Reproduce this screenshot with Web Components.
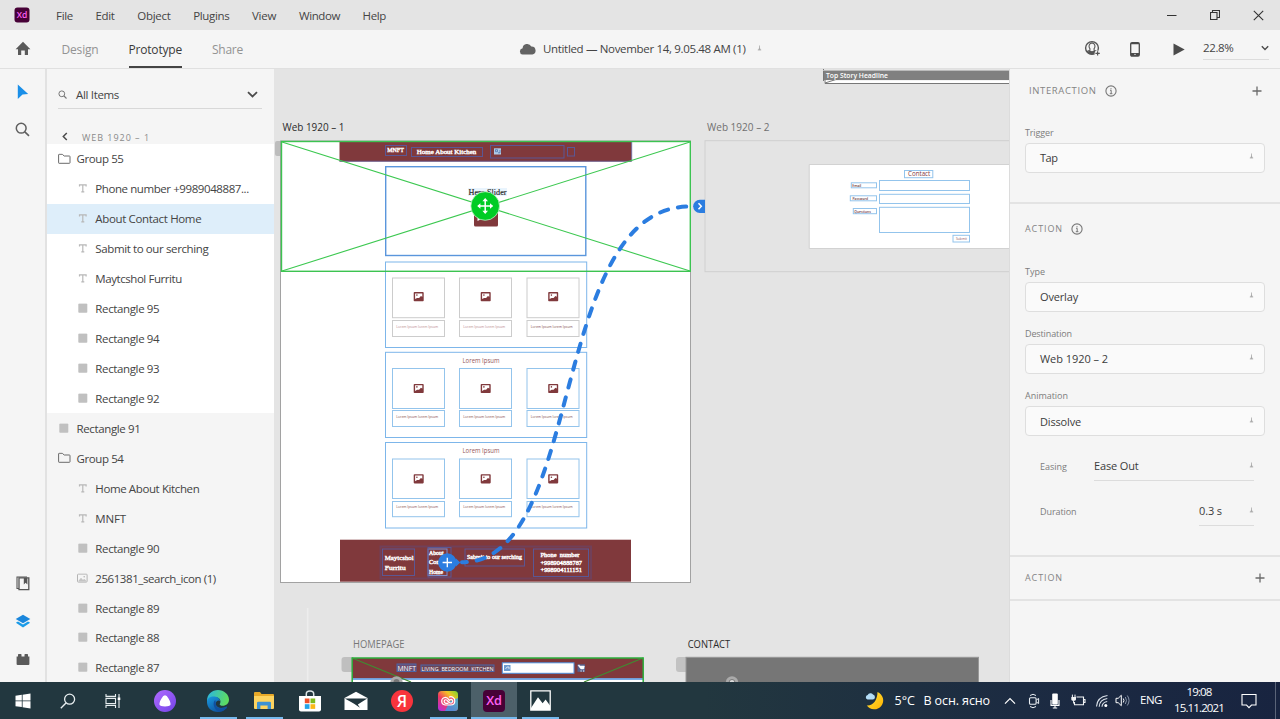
<!DOCTYPE html>
<html lang="en">
<head>
<meta charset="utf-8">
<title>Prototype editor</title>
<style>
html,body{margin:0;height:100%;overflow:hidden}
body{font-family:"Open Sans","Noto Sans",sans-serif;font-size:11.5px;color:#444}
</style>
</head>
<body>
<proto-app></proto-app>
<script>
function define(name, html, after) {
  const t = document.createElement('template');
  t.innerHTML = html;
  customElements.define(name, class extends HTMLElement {
    connectedCallback() {
      if (this.shadowRoot) return;
      this.attachShadow({mode: 'open'}).appendChild(document.importNode(t.content, true));
      if (after) after.call(this, this.shadowRoot);
    }
  });
}

// A one-line label whose tracking is adjusted to a given width
define('ui-label', `<style>
:host{display:block;flex:none;white-space:nowrap;line-height:16px}
span{display:inline-block;white-space:pre}
</style><span><slot></slot></span>`, function (root) {
  const w = +this.getAttribute('w'), size = this.getAttribute('size');
  if (size) this.style.fontSize = size + 'px';
  if (w) {
    this.style.letterSpacing = '0px';
    const natural = root.querySelector('span').getBoundingClientRect().width;
    this.style.letterSpacing = ((w - natural) / this.textContent.length) + 'px';
    this.style.width = w + 'px';
  }
});

const ICONS = {
  xd: [16,16,'<rect x=".5" y=".5" width="15" height="15" rx="3" fill="#470137"/><text x="2.8" y="10.6" font-size="8.5" font-weight="600" fill="#ff61f6" textLength="10.6" lengthAdjust="spacingAndGlyphs">Xd</text>'],
  home: [16,15,'<path d="M8 .8 15.4 8.2H13V14H9.8V9.5H6.2V14H3V8.2H.6Z" fill="#5a5a5a"/>'],
  min: [10,10,'<path d="M0 5.5H9.5" stroke="#333"/>'],
  restore: [10,10,'<path d="M.5 2.5H7V9.5H.5ZM2.5 2.5V.5H9.5V7.5H7" fill="none" stroke="#333" stroke-width="1.1"/>'],
  close: [11,11,'<path d="M.8.8 10.2 10.2M10.2.8.8 10.2" stroke="#333" stroke-width="1.1"/>'],
  cloud: [17,12,'<path d="M3.5 11.5A3.2 3.2 0 0 1 3.6 5.2 4.6 4.6 0 0 1 12.3 3.6 4 4 0 0 1 13.4 11.5Z" fill="#636363"/>'],
  tick: [5,6,'<path d="M2.5 .5V4M.8 5H4.2" stroke="#aaa" stroke-width=".8"/><path d="M2.5 2 3.8 5H1.2Z" fill="#aaa"/>'],
  user: [17,17,'<circle cx="8" cy="8" r="6.4" fill="none" stroke="#555" stroke-width="1.4"/><path d="M8 2.9A3 3.5 0 0 1 10 9L10.2 10.2 12.9 11.5A6 6 0 0 1 3.1 11.5L5.8 10.2 6 9A3 3.5 0 0 1 8 2.9Z" fill="#f5f5f5" stroke="#555" stroke-width="1.1"/><path d="M3.2 12 5.9 10.5 8 11.3 10.1 10.5 12 11.8 11 14H5Z" fill="#555"/><circle cx="13.6" cy="13.4" r="3" fill="#f5f5f5"/><path d="M13.6 11.2V15.6M11.4 13.4H15.8" stroke="#555" stroke-width="1.2"/>'],
  phone: [10,15,'<rect x=".7" y=".7" width="8.6" height="13.4" rx="1.3" fill="none" stroke="#4b4b4b" stroke-width="1.3"/><path d="M1 11H9V14H1ZM1 1H9V2.3H1Z" fill="#4b4b4b"/><circle cx="5" cy="12.4" r=".7" fill="#eee"/>'],
  play: [12,13,'<path d="M.5.4 11.7 6.5.5 12.6Z" fill="#4b4b4b"/>'],
  down: [8,6,'<path d="M.8 1.2 4 4.4 7.2 1.2" fill="none" stroke="#4b4b4b" stroke-width="1.4"/>'],
  downbig: [11,7,'<path d="M1 1.2 5.5 5.4 10 1.2" fill="none" stroke="#4b4b4b" stroke-width="1.8"/>'],
  back: [6,9,'<path d="M4.8 1 1.3 4.5 4.8 8" fill="none" stroke="#4b4b4b" stroke-width="1.5"/>'],
  cursor: [12,16,'<path d="M.8.6 11.2 10 5.5 10.4.8 15Z" fill="#1a8fe8"/>'],
  search: [15,15,'<circle cx="6.2" cy="6.2" r="4.9" fill="none" stroke="#5f5f5f" stroke-width="1.5"/><path d="M9.8 9.8 14 13.8" stroke="#5f5f5f" stroke-width="1.6"/>'],
  searchsm: [9,9,'<circle cx="3.8" cy="3.8" r="2.9" fill="none" stroke="#777"/><path d="M6 6 8.5 8.5" stroke="#777" stroke-width="1.1"/>'],
  library: [14,15,'<path d="M3 12.5H1V1H11" fill="none" stroke="#555" stroke-width="1.1"/><path d="M3 1.8H12.8V13.7H3Z" fill="none" stroke="#555" stroke-width="1.3"/><path d="M7.8 2H11.4V8.4L9.6 6.7 7.8 8.4Z" fill="#555"/>'],
  layers: [16,15,'<path d="M8 .8 15.3 5 8 9.2.7 5Z" fill="#1a86dc"/><path d="M.9 8.8 3 7.5 8 10.4 13 7.5 15.1 8.8 8 13.6Z" fill="#1a9be8"/>'],
  plugin: [14,13,'<path d="M.6 3.4H2V1.6Q2 .9 2.8.9H4.8Q5.5.9 5.5 1.6V3.4H8.5V1.6Q8.5.9 9.2.9H11.2Q12 .9 12 1.6V3.4H13.4V11Q13.4 12 12.4 12H1.6Q.6 12 .6 11Z" fill="#5a5a5a"/>'],
  folder: [13,11,'<path d="M.6 9.5V1.5Q.6 1 1.1 1H4.3L6.2 2.7H11.4Q12 2.7 12 3.3V9.5Q12 10 11.4 10H1.1Q.6 10 .6 9.5Z" fill="none" stroke="#6b6b6b"/>'],
  text: [10,10,'<path d="M1.5 3.2V1.5H8.1V3.2M4.8 1.5V8.5M3.3 8.5H6.3" fill="none" stroke="#b8b8b8" stroke-width="1.2"/>'],
  rect: [10,10,'<rect x=".3" y=".3" width="9" height="9.2" rx=".8" fill="#c0c0c0"/>'],
  image: [11,10,'<rect x=".5" y=".8" width="9.6" height="8" rx=".8" fill="none" stroke="#b4b4b4"/><path d="M1.5 7.5 4 4.5 5.8 6.5 7.5 5.8 9.2 7.5V8.3H1.5Z" fill="#c4c4c4"/><circle cx="7.2" cy="3.4" r=".8" fill="#b4b4b4"/>'],
  info: [12,12,'<circle cx="6" cy="6" r="5.1" fill="none" stroke="#777" stroke-width="1.1"/><path d="M5 5.3H6.2V8.6M4.8 8.7H7.4M6 3.2V4.3" fill="none" stroke="#777"/>'],
  plus: [10,10,'<path d="M5 .5V9.5M.5 5H9.5" stroke="#6b6b6b" stroke-width="1.3"/>'],
  win: [16,16,'<path d="M.5 2.8 6.8 1.8V7.5H.5ZM7.6 1.7 15.5.5V7.5H7.6ZM.5 8.3H6.8V14.1L.5 13.2ZM7.6 8.3H15.5V15.5L7.6 14.3Z" fill="#fff"/>'],
  wsearch: [16,16,'<circle cx="9.6" cy="6.2" r="5" fill="none" stroke="#e8eef0" stroke-width="1.3"/><path d="M6 10 .8 15.2" stroke="#e8eef0" stroke-width="1.4"/>'],
  taskview: [16,16,'<path d="M1 1V3.4H10.5V1M1 15V12.5H10.5V15M1 5.4H10.5V10.6H1ZM14 1V15" fill="none" stroke="#e8eef0" stroke-width="1.1"/><path d="M12.7 4.5H15.3V7H12.7Z" fill="#fff"/>'],
  alice: [22,22,'<defs><linearGradient id="a" x2="1" y2="1"><stop stop-color="#b06bff"/><stop offset="1" stop-color="#7343e8"/></linearGradient></defs><circle cx="11" cy="11" r="11" fill="url(#a)"/><path d="M11 5.2Q12.8 5.2 14.5 8.5 17.2 13 16.4 15.1 15.7 16.5 11 16.5T5.6 15.1Q4.8 13 7.5 8.5 9.2 5.2 11 5.2Z" fill="#fff"/>'],
  edge: [24,24,'<defs><linearGradient id="e" x2="1" y2=".25"><stop stop-color="#28b4e8"/><stop offset="1" stop-color="#5ddc62"/></linearGradient><linearGradient id="f" x2=".8" y2="1"><stop stop-color="#1a9ae0"/><stop offset="1" stop-color="#0d4a96"/></linearGradient></defs><path d="M1 12C1 5 6 1 12 1S23 5.5 23 10.8C23 14.5 20 16.8 16.8 16.8 14.7 16.8 13.6 16 13.7 15.2 15.5 12.5 14.2 8.2 9.6 8.2 5 8.2 1.2 10.8 1 14Z" fill="url(#e)"/><path d="M1 13C1 9 4.7 7.2 8.5 7.5 12.3 7.8 14 10.1 14 12 12.5 10.8 10 11.7 9.8 14.6 9.6 18.4 14.4 20.2 19.9 17.8 21.6 17.1 21.2 18.6 20.3 19.5 18 22 15.2 23 12 23 5.5 23 1 18.8 1 13Z" fill="url(#f)"/><path d="M9.3 11C6.2 13.4 7.6 20 12.3 22.3 15.6 23.2 19 20.7 20.8 18.7 16 20.6 9.7 19.8 9.8 14.2Z" fill="#114f9e"/>'],
  explorer: [22,20,'<path d="M1 2Q1 1 2 1H7L8.5 3H20Q21 3 21 4V17H1Z" fill="#e8a928"/><path d="M1 5H21V17Q21 18 20 18H2Q1 18 1 17Z" fill="#fdd35f"/><path d="M4 18V12Q4 10.8 5.2 10.8H16.8Q18 10.8 18 12V18H14.6V14.5H7.4V18Z" fill="#3c91d4"/>'],
  store: [22,22,'<path d="M7.3 7V4Q7.3 1 11 1T14.7 4V7" fill="none" stroke="#dce4e6" stroke-width="1.5"/><path d="M0 6H22V19.5Q22 21.5 20 21.5H2Q0 21.5 0 19.5Z" fill="#fff"/><path d="M5.8 8.5H10.5V13.2H5.8Z" fill="#f0512a"/><path d="M11.5 8.5H16.2V13.2H11.5Z" fill="#7ebb1c"/><path d="M5.8 14.2H10.5V18.9H5.8Z" fill="#23a4e8"/><path d="M11.5 14.2H16.2V18.9H11.5Z" fill="#fbb817"/>'],
  mail: [24,20,'<path d="M.5 7 12 .8 23.5 7V19H.5Z" fill="#fff"/><path d="M.8 7.4H23.2L13.8 13.4 16 16.8 9.7 12.6Z" fill="#22363e"/>'],
  yandex: [22,22,'<circle cx="11" cy="11" r="11" fill="#f8343c"/><text x="11" y="16.6" font-size="15.5" font-weight="600" text-anchor="middle" fill="#fff">Я</text>'],
  cc: [20,20,'<defs><linearGradient id="g" x1="1" y1="0" x2="0" y2="1"><stop stop-color="#70d630"/><stop offset=".3" stop-color="#f5c425"/><stop offset=".6" stop-color="#f03b5e"/><stop offset="1" stop-color="#b12df0"/></linearGradient></defs><rect width="20" height="20" rx="3.5" fill="url(#g)"/><path d="M20 7V16.5Q20 20 16.5 20H7L12 10Z" fill="#329eea" opacity=".8"/><path d="M11 6.2A4 4 0 0 1 16.8 10.2 4 4 0 0 1 12.8 14H7A3.8 3.8 0 0 1 6.8 6.5C9.4 6 10.3 8 11.7 9.8M10.5 12.2C7.8 12.8 6.3 12.1 6.2 10.2 6.3 8.3 8.7 8.3 9.6 10L12 12C14 12.2 15.2 10.8 14.6 9.5 13.6 7.8 11.7 8.5 11.4 9.5" fill="#ee5a78" stroke="#fff" stroke-width="1.2"/>'],
  xdbig: [22,22,'<rect width="22" height="22" rx="4" fill="#470137"/><text x="3.2" y="15.4" font-size="12.5" font-weight="600" fill="#ff61f6" textLength="15.8" lengthAdjust="spacingAndGlyphs">Xd</text>'],
  photos: [21,21,'<path d="M.8.8H20.2V20.2H.8Z" fill="none" stroke="#fff" stroke-width="1.3"/><path d="M1 18 8 7.2 12.6 13.2 15.6 9.5 20 15.5V20H1Z" fill="#fff"/>'],
  moon: [20,20,'<defs><linearGradient id="m" x2="1" y2="1"><stop stop-color="#ffe33e"/><stop offset="1" stop-color="#ffb300"/></linearGradient></defs><path d="M12.5 1A9 9 0 1 1 1.8 14.5C8 15 12.5 9 12.5 1Z" fill="url(#m)"/><path d="M2.6 8.6A2.3 2.3 0 0 1 2.7 4.1 3 3 0 0 1 8 3.5 2.6 2.6 0 0 1 7.7 8.6Z" fill="#b4def8"/>'],
  up: [12,8,'<path d="M1 6.7 6 1.7 11 6.7" fill="none" stroke="#fff" stroke-width="1.2"/>'],
  meet: [12,16,'<rect x="1.5" y="4.7" width="6.6" height="6.6" rx="1" fill="none" stroke="#e8edf2" stroke-width="1.1"/><path d="M8.3 7 10.6 5.5V10.5L8.3 9M2 2.5Q5 0 8 2.5M2 13.5Q5 16 8 13.5" fill="none" stroke="#e8edf2"/>'],
  mic: [10,16,'<rect x="2.2" y=".5" width="5.6" height="11" rx="1" fill="#fff"/><path d="M1 7V12.4H9V7M5 12.4V15M2.8 15H7.2" fill="none" stroke="#fff" stroke-width="1.1"/>'],
  battery: [16,13,'<path d="M6.5 3H13.5V10.8H4.5V8M13.8 5.5H15V8.5H13.8" fill="none" stroke="#f1f3f5" stroke-width="1.1"/><path d="M1.3 3H6V5.6Q6 7 3.6 7T1.3 5.6Z" fill="#f1f3f5"/><path d="M2.4.6V3M5 .6V3M3.6 7V9.5" stroke="#f1f3f5"/>'],
  wifi: [14,14,'<path d="M1.5 12.5Q2 3 12.5 1.5M4.2 12.7Q4.5 5.7 12.3 4.5M7 12.8Q7.3 8.3 12.2 7.5" fill="none" stroke="#d9e0e8" stroke-width="1.1"/><circle cx="10.8" cy="11.5" r="1.5" fill="#fff"/>'],
  sound: [16,13,'<path d="M1 4.3H3.2L6.3 1.3V11.7L3.2 8.7H1Z" fill="none" stroke="#fff"/><path d="M8.3 4.5Q9.6 6.5 8.3 8.5" fill="none" stroke="#fff"/><path d="M10.3 3Q12.7 6.5 10.3 10M12.3 1.5Q15.8 6.5 12.3 11.5" fill="none" stroke="#8894a7"/>'],
  note: [16,16,'<path d="M1 1.5H15V12H10.5L8 14.6 5.5 12H1Z" fill="none" stroke="#fff" stroke-width="1.1"/>']
};
customElements.define('ui-icon', class extends HTMLElement {
  connectedCallback() {
    if (this.shadowRoot) return;
    const [w, h, body] = ICONS[this.getAttribute('name')];
    this.attachShadow({mode: 'open'}).innerHTML = `<style>:host{display:block;flex:none;width:${w}px;height:${h}px}svg{display:block}</style><svg width="${w}" height="${h}" viewBox="0 0 ${w} ${h}">${body}</svg>`;
  }
});

define('title-bar', `<style>
:host{display:flex;height:30px;background:#e4e4e4;align-items:center;box-sizing:border-box;padding:0 16px 1px 14px}
nav{display:flex;margin-left:26px;gap:22.6px;padding-top:2px}
.win{margin-left:auto;display:flex;gap:33px;align-items:center;padding-top:1px}
</style><ui-icon name="xd"></ui-icon>
<nav><ui-label w="17">File</ui-label><ui-label w="19">Edit</ui-label><ui-label w="33.5">Object</ui-label><ui-label w="36">Plugins</ui-label><ui-label w="24.5">View</ui-label><ui-label w="41">Window</ui-label><ui-label w="23.5">Help</ui-label></nav>
<div class="win"><ui-icon name="min"></ui-icon><ui-icon name="restore"></ui-icon><ui-icon name="close"></ui-icon></div>`);

define('mode-bar', `<style>
:host{display:grid;grid-template-columns:519px 1fr auto;height:39px;background:#f5f5f5;box-sizing:border-box;border-bottom:1px solid #e0e0e0}
.l,.m,.r{display:flex;align-items:center}
.l{padding-left:14.5px;gap:30px;color:#939393;font-size:12px}
.l ui-icon{margin-right:1px;margin-top:-1px}
.tab{height:38px;display:flex;align-items:center;box-sizing:border-box;border-bottom:2px solid transparent;padding-top:3px}
.on{border-color:#444;color:#3a3a3a}
.m{padding-bottom:1px}
.m ui-label{margin:0 11px 0 7px;color:#444}
.r{padding:0 11px 1px 0}
.zoom{display:flex;align-items:center;width:66px;height:22px;justify-content:space-between;border-bottom:1px solid #dcdcdc;margin-left:18px}
</style>
<div class="l"><ui-icon name="home"></ui-icon><div class="tab"><ui-label w="37">Design</ui-label></div><div class="tab on"><ui-label w="53.5">Prototype</ui-label></div><div class="tab"><ui-label w="31">Share</ui-label></div></div>
<div class="m"><ui-icon name="cloud"></ui-icon><ui-label w="202.5">Untitled — November 14, 9.05.48 AM (1)</ui-label><ui-icon name="tick" style="margin-top:-2px"></ui-icon></div>
<div class="r"><ui-icon name="user"></ui-icon><ui-icon name="phone" style="margin:1px 33px 0 29px"></ui-icon><ui-icon name="play" style="margin-top:1px"></ui-icon><div class="zoom"><ui-label w="30.5">22.8%</ui-label><ui-icon name="down"></ui-icon></div></div>`);

define('tool-rail', `<style>
:host{display:flex;flex-direction:column;align-items:center;width:47px;box-sizing:border-box;padding:15px 0 16px 0;background:#f5f5f5;border-right:2px solid #e2e2e2}
.s{flex:1}
</style><ui-icon name="cursor"></ui-icon><ui-icon name="search" style="margin-top:22px"></ui-icon><div class="s"></div><ui-icon name="library"></ui-icon><ui-icon name="layers" style="margin:23px 0 24px"></ui-icon><ui-icon name="plugin"></ui-icon>`);

define('layer-row', `<style>
:host{display:flex;height:29.95px;box-sizing:border-box;align-items:center;padding:1px 0 0 10.5px}
:host([deep]){padding-left:29.3px}
:host([selected]){background:#deeefa}
.i{width:13px;display:flex;justify-content:center;margin-right:6px;transform:translateY(-.7px)}
</style><span class="i"></span><slot></slot>`, function (root) {
  const i = document.createElement('ui-icon');
  i.setAttribute('name', this.getAttribute('icon'));
  root.querySelector('.i').append(i);
});

define('layers-panel', `<style>
:host{display:flex;flex-direction:column;width:227px;height:613px;background:#f5f5f5;overflow:hidden}
:host>*,.search,.crumb,.open,.rest{flex:none}
.search{display:flex;align-items:center;margin:12px 12px 0 11px;height:28px;box-sizing:border-box;border-bottom:1.5px solid #d8d8d8;padding:0 4px 0 0}
.search ui-label{margin-left:9px;margin-right:auto}
.crumb{display:flex;align-items:center;height:35px;box-sizing:border-box;padding:22px 0 0 15px;color:#8a8a8a}
.open{background:#fff}
</style>
<div class="search"><ui-icon name="searchsm"></ui-icon><ui-label w="43">All Items</ui-label><ui-icon name="downbig"></ui-icon></div>
<div class="crumb"><ui-icon name="back" style="margin:-3px 14px 0 0"></ui-icon><ui-label size="9" w="68">WEB 1920 – 1</ui-label></div>
<div class="open"></div><div class="rest"></div>`, function (root) {
  const row = (icon, text, w, deep, sel) => `<layer-row icon="${icon}" ${deep ? 'deep' : ''} ${sel ? 'selected' : ''}><ui-label w="${w}">${text}</ui-label></layer-row>`;
  root.querySelector('.open').innerHTML = row('folder', 'Group 55', 47) + row('text', 'Phone number +9989048887...', 153.5, 1) + row('text', 'About Contact Home', 106, 1, 1) + row('text', 'Sabmit to our serching', 113, 1) + row('text', 'Maytcshol Furritu', 86.5, 1) + [95, 94, 93, 92].map(n => row('rect', 'Rectangle ' + n, 64, 1)).join('');
  root.querySelector('.rest').innerHTML = row('rect', 'Rectangle 91', 64) + row('folder', 'Group 54', 47) + row('text', 'Home About Kitchen', 104, 1) + row('text', 'MNFT', 30.5, 1) + row('rect', 'Rectangle 90', 64, 1) + row('image', '2561381_search_icon (1)', 120.5, 1) + [89, 88, 87].map(n => row('rect', 'Rectangle ' + n, 64, 1)).join('');
});

// The free design canvas: artboards, selection frames and the prototype wire
define('design-canvas', `<style>
:host{display:block;background:#e4e4e4;overflow:hidden;min-width:0}
svg{display:block}
</style><div></div>`, function (root) {
  const box = (x, y, x2, y2, stroke, fill = 'none', sw = 1) => `<rect x="${x}" y="${y}" width="${x2 - x}" height="${y2 - y}" fill="${fill}" stroke="${stroke}" stroke-width="${sw}"/>`;
  const txt = (x, y, w, size, fill, s, extra = '') => `<text x="${x}" y="${y}" font-size="${size}" fill="${fill}" textLength="${w}" lengthAdjust="spacingAndGlyphs" ${extra}>${s}</text>`;
  const M = '#80393c', B = '#93c4ec', F = '#5a5794', serif = 'font-family="Liberation Serif,serif" stroke="#fff" stroke-width=".4"';
  const pic = (x, y) => `<g transform="translate(${x - 5} ${y - 4.7})"><rect width="10" height="9.2" rx=".8" fill="${M}"/><path d="M1.4 1.3H8.6V4.6L7.2 3.8 5.4 5.8H3.4L1.4 7Z" fill="#fff"/><circle cx="3.2" cy="3" r=".8" fill="${M}"/></g>`;
  const group = (y, y2, cy, cy2, ty, ty2, iy, line, title, base) => {
    let o = box(385.5, y, 586.7, y2, '#7db6ea');
    if (title) o += txt(462.5, title, 37, 7, '#94585b', 'Lorem Ipsum');
    [392.5, 459.5, 527].forEach((x, i) => {
      o += box(x, cy, x + 52, cy2, line) + box(x, ty, x + 52, ty2, line) + pic(x + 26.2, iy);
      o += txt(x + 3.7, base, 42, 3.8, !title && i < 2 ? '#b98e90' : '#854e50', 'Lorem Ipsum lorem Ipsum');
    });
    return o;
  };
  root.querySelector('div').innerHTML = `<svg width="735" height="613" viewBox="274 69 735 613">
  <path d="M307.7 608V682" stroke="#ededed" stroke-width="1.5"/>
  <rect x="823" y="71" width="190" height="9.3" fill="#808080"/><rect x="824" y="80.2" width="190" height="3" fill="#fff"/>
  <path d="M823.5 69V81M825 80V83.5H1010M825 83 839 78.5" stroke="#777" fill="none"/><path d="M823 70.5H1010" stroke="#bbb"/>
  ${txt(826, 78.3, 62, 7.4, '#fff', 'Top Story Headline', 'font-weight="600"')}
  ${txt(282.5, 131, 62, 10, '#2b2b2b', 'Web 1920 – 1')}
  ${txt(707, 131, 62.5, 10, '#707070', 'Web 1920 – 2')}
  <rect x="275" y="141" width="7" height="15" rx="2" fill="#bdbdbd"/>
  ${box(280.5, 141, 690.5, 582.5, '#a2a2a2', '#fff')}
  <rect x="339.5" y="141" width="292" height="20.5" fill="${M}"/><path d="M339.5 161.2H631.7V142" fill="none" stroke="${F}" stroke-width=".8"/>
  ${box(385.5, 145.5, 406.5, 155.5, F)}${box(411.5, 147.5, 482.5, 156.5, F)}${box(490.5, 145.5, 564, 158, F)}${box(567.5, 147.5, 574.5, 156, F)}
  ${txt(387.3, 152.3, 16.5, 6.5, '#fff', 'MNFT', serif)}
  ${txt(416.8, 153.5, 59.5, 6.8, '#fff', 'Home About Kitchen', serif)}
  <rect x="494" y="148.3" width="7" height="6.2" fill="#aecae8"/><path d="M495.5 149.7H497.5V151.7H495.5ZM498 152.8H500V150" stroke="#4468a6" fill="none" stroke-width=".7"/>
  ${box(385.7, 166.7, 585.8, 255.5, '#5a96dc', 'none', 1.4)}
  <rect x="468" y="188" width="39" height="8" fill="#e9f4fd"/>
  ${txt(468.5, 195, 38, 8.5, '#222', 'Hero Slider', 'font-family="Liberation Serif,serif" stroke="#222" stroke-width=".15"')}
  <path d="M474 209H498V225Q498 226.5 496.5 226.5H475.5Q474 226.5 474 225Z" fill="${M}"/><path d="M477.5 217.5V221L480.5 219.5Z" fill="#fff"/>
  ${group(262, 347.5, 278, 317.7, 320.5, 336.5, 296.8, '#ccc', 0, 328)}
  ${group(352.3, 437.5, 368.5, 408.5, 410.5, 426.5, 388.6, B, 362.6, 418)}
  ${group(442.5, 528, 459, 498.5, 501.5, 516.7, 478.9, B, 453.3, 508.2)}
  <rect x="340" y="539.7" width="291" height="42" fill="${M}"/>
  ${box(380.5, 546.5, 591, 578.5, '#714059', 'none', 2)}${box(382.5, 549, 414.5, 575.5, F)}${box(428, 549, 447, 575.5, '#7a8fd0')}${box(428, 547.5, 451, 577, F)}${box(465, 549, 524.5, 566, F)}${box(533.5, 549, 588.5, 576.5, F)}
  ${txt(384.7, 560.2, 29, 7, '#fff', 'Maytcshol', serif)}${txt(384.7, 570.2, 21, 7, '#fff', 'Furritu', serif)}
  ${txt(429, 555, 14.5, 6, '#fff', 'About', serif)}${txt(429, 564.3, 20, 6, '#fff', 'Contact', serif)}${txt(429, 574, 14, 6, '#fff', 'Home', serif)}
  ${txt(467, 559, 55, 6.3, '#fff', 'Sabmit to our serching', serif)}
  ${txt(540.5, 557, 39, 6.3, '#fff', 'Phone&#160; number', serif)}${txt(540.5, 564.5, 41.5, 6.3, '#fff', '+998904888787', serif)}${txt(540.5, 572, 41.5, 6.3, '#fff', '+998904111151', serif)}
  ${box(281.5, 141.5, 690.3, 271.3, '#3cc351', 'none', 1.4)}
  <path d="M282 142 690 271M282 271 690 142" stroke="#3cc850" stroke-width="1.1"/>
  <circle cx="485.2" cy="206" r="14.3" fill="#00cc25" stroke="#b9f0c0" stroke-width=".8"/>
  <path d="M485.2 199V213M478.2 206H492.2" stroke="#fff" stroke-width="1.5"/><path d="M485.2 198 488 201.2H482.4ZM485.2 214 488 210.8H482.4ZM477.2 206 480.4 203.2V208.8ZM493.2 206 490 203.2V208.8Z" fill="#fff"/>
  ${box(705, 140.7, 1012, 271.7, '#cfcfcf', '#e4e4e4')}
  <rect x="809.5" y="165" width="203" height="83.3" fill="#fff"/><path d="M1009 164.5H809.2V248.5H1009" fill="none" stroke="#d2d2d2"/>
  ${box(904.5, 170.5, 932.8, 177.7, B)}${txt(908, 176.4, 22.3, 7, M, 'Contact')}
  ${box(879.5, 180.5, 969.5, 190.5, B)}${box(879.5, 194.3, 969.5, 203.5, B)}${box(879.5, 207.3, 969.5, 232.5, B)}
  ${box(851.3, 182.8, 876.5, 187.8, B)}${box(850.3, 195.8, 876.5, 200.8, B)}${box(853.3, 208.5, 876.5, 213.7, B)}${box(953, 235.3, 969.5, 242, B)}
  ${txt(852.3, 186.5, 9, 4, '#6b3038', 'Email', 'font-weight="600"')}${txt(852.5, 200, 15.5, 4, '#6b3038', 'Password', 'font-weight="600"')}${txt(854.3, 212.8, 16.5, 4, '#6b3038', 'Questions', 'font-weight="600"')}${txt(956, 240, 11, 4, '#94585b', 'Submit')}
  <path d="M690 206.5C548 206.5 586 562.3 462 562.3" fill="none" stroke="#2b7de0" stroke-width="4" stroke-linecap="round" stroke-dasharray="8.4 10.1" stroke-dashoffset="-3.7"/>
  <path d="M456 558.5 460.3 562.5 456 566.5Z" fill="#2b7de0"/><circle cx="447.3" cy="562.5" r="9.2" fill="#2b7de0"/><path d="M447.3 557.8V567.2M442.6 562.5H452" stroke="#fff" stroke-width="1.3"/>
  <path d="M705 199.7H699.8A6.6 6.6 0 0 0 699.8 213H705Z" fill="#2b7de0"/><path d="M698.5 203.3 701.3 206.3 698.5 209.3" stroke="#fff" fill="none" stroke-width="1.5"/>
  ${txt(353, 648, 51.5, 10, '#777', 'HOMEPAGE')}${txt(687.7, 648, 42.5, 10, '#2b2b2b', 'CONTACT')}
  <rect x="341.5" y="657" width="13" height="15" rx="3" fill="#bfbfbf"/><rect x="676" y="657" width="13" height="15" rx="3" fill="#c2c2c2"/>
  <rect x="352" y="658" width="291" height="20.5" fill="${M}"/><rect x="352" y="678.5" width="291" height="4" fill="#fff"/><path d="M352 679H643" stroke="#4f8fdc" stroke-width="1.3"/>
  <path d="M352 658 411 682M643 658 584 682" stroke="#3f8c32" stroke-width="1.2"/><path d="M352.2 683V658H643.2V683" stroke="#2cae3b" stroke-width="1.5" fill="none"/>
  ${box(397, 664, 416, 671.5, '#4a67a8', '#6b4e72')}${box(421, 665, 494, 671.5, '#4a67a8', '#6b4658')}
  ${txt(397.5, 670.7, 18.5, 7, '#fff', 'MNFT')}${txt(421.5, 670.6, 72, 5.5, '#fff', 'LIVING&#160; BEDROOM&#160; KITCHEN')}
  ${box(502.3, 662.8, 574, 673.3, '#4f8fdc', '#fff')}<rect x="504" y="665" width="6.5" height="6" fill="#6d9bd0"/><path d="M505.5 669 507 667H509V669" stroke="#fff" fill="none" stroke-width=".7"/>
  <rect x="577.5" y="664.3" width="7.5" height="7.5" fill="#55618f"/><path d="M578 665.2H579.4L580.4 666H584.4L583.8 669H580.8Z" fill="#fff" stroke="#fff" stroke-width=".5"/><path d="M580.5 671H581.7M583 671H584.2" stroke="#fff"/>
  <circle cx="396.5" cy="682.5" r="6.2" fill="#aaa"/><circle cx="396.5" cy="682" r="3" fill="#777"/>
  <rect x="686" y="657.3" width="292.5" height="30" fill="#767676" stroke="#989898"/>
  <circle cx="732" cy="682.5" r="6.2" fill="#aaa"/><circle cx="732" cy="682.5" r="3" fill="#ddd" stroke="#777"/>
  </svg>`;
});

define('select-box', `<style>
:host{display:flex;align-items:center;box-sizing:border-box;height:30px;border:1.5px solid #dedede;border-radius:4px;background:#fafafa;padding:1px 10px 0 14px;justify-content:space-between;color:#3c3c3c}
ui-icon{margin-top:-4px}
</style><slot></slot><ui-icon name="tick"></ui-icon>`);

define('interaction-panel', `<style>
:host{display:block;width:271px;box-sizing:border-box;background:#f5f5f5;border-left:1px solid #dcdcdc}
section{box-sizing:border-box;border-bottom:2px solid #e3e3e3;padding:0 15px}
.h{display:flex;align-items:center;color:#848484}
.h ui-icon[name=info]{margin-left:8px}
.h ui-icon[name=plus]{margin-left:auto}
.c{color:#7c7c7c}
.row{display:flex;justify-content:space-between;padding:0 11px 0 15px;align-items:center}
.row>.c{margin-top:1px}
.v{display:flex;align-items:center;justify-content:space-between;box-sizing:border-box;height:29px;border-bottom:1px solid #dcdcdc;color:#3c3c3c}
.v ui-icon{margin-top:-2px}
</style>
<section style="height:135px;padding-top:14px"><div class="h" style="padding:0 3px 0 4px"><ui-label size="9.5" w="67.5">INTERACTION</ui-label><ui-icon name="info"></ui-icon><ui-icon name="plus"></ui-icon></div>
<ui-label class="c" size="9" w="28.5" style="margin:26px 0 1.5px">Trigger</ui-label><select-box><ui-label w="17.5" size="11">Tap</ui-label></select-box></section>
<section style="height:353px;padding-top:17px"><div class="h"><ui-label size="9" w="38">ACTION</ui-label><ui-icon name="info"></ui-icon></div>
<ui-label class="c" size="9" w="20" style="margin:27px 0 1.5px">Type</ui-label><select-box><ui-label w="38" size="11">Overlay</ui-label></select-box>
<ui-label class="c" size="9" w="47" style="margin:14.5px 0 1.5px">Destination</ui-label><select-box style="padding-top:0"><ui-label w="68" size="11">Web 1920 – 2</ui-label></select-box>
<ui-label class="c" size="9" w="43" style="margin:14.5px 0 2px">Animation</ui-label><select-box><ui-label w="41" size="11">Dissolve</ui-label></select-box>
<div class="row" style="margin-top:16px"><ui-label class="c" size="9" w="27">Easing</ui-label><div class="v" style="width:160px"><ui-label w="44.5" size="11">Ease Out</ui-label><ui-icon name="tick"></ui-icon></div></div>
<div class="row" style="margin-top:16px"><ui-label class="c" size="9" w="36.5">Duration</ui-label><div class="v" style="width:55px"><ui-label w="23" size="11">0.3 s</ui-label><ui-icon name="tick"></ui-icon></div></div></section>
<section class="h" style="height:44px"><ui-label size="9" w="38">ACTION</ui-label><ui-icon name="plus"></ui-icon></section>`);

define('task-button', `<style>
:host{display:flex;width:46px;height:37px;align-items:center;justify-content:center;flex:none;position:relative}
:host([active]){background:#4c6069}
:host([running])::after{content:"";position:absolute;left:5px;right:4px;bottom:0;height:2px;background:#76b9ed}
:host([active])::after{left:0;right:0}
</style><slot></slot>`);

define('task-bar', `<style>
:host{display:flex;height:37px;background:linear-gradient(90deg,#22373f 0,#22373f 55%,#1c2b42 80%,#182440 100%);color:#fff;box-sizing:border-box}
.apps,.tray{display:flex;align-items:center}
.tray{margin-left:auto;padding-right:4px}
.clock{display:flex;flex-direction:column;align-items:center;width:50px;margin-top:-1px}
.clock ui-label{line-height:16.5px}
.edge{width:1px;height:37px;background:#5a6478}
</style><div class="apps">
<task-button style="width:45px"><ui-icon name="win"></ui-icon></task-button><task-button style="width:45px"><ui-icon name="wsearch"></ui-icon></task-button><task-button style="width:45px"><ui-icon name="taskview"></ui-icon></task-button>
<task-button style="width:60px"><ui-icon name="alice"></ui-icon></task-button>
<task-button running><ui-icon name="edge"></ui-icon></task-button><task-button running><ui-icon name="explorer"></ui-icon></task-button><task-button><ui-icon name="store"></ui-icon></task-button><task-button><ui-icon name="mail"></ui-icon></task-button><task-button><ui-icon name="yandex"></ui-icon></task-button><task-button running><ui-icon name="cc"></ui-icon></task-button><task-button running active><ui-icon name="xdbig"></ui-icon></task-button><task-button running><ui-icon name="photos"></ui-icon></task-button></div>
<div class="tray"><ui-icon name="moon" style="margin-right:1px"></ui-icon><ui-label size="12.5" w="20.5" style="margin:1px 8.5px 0 9px">5°C</ui-label><ui-label size="12.5" w="66.5" style="margin:1px 14px 0 0">В осн. ясно</ui-label><ui-icon name="up"></ui-icon><ui-icon name="meet" style="margin-left:12px"></ui-icon><ui-icon name="mic" style="margin-left:10px"></ui-icon><ui-icon name="battery" style="margin-left:10px"></ui-icon><ui-icon name="wifi" style="margin-left:9px"></ui-icon><ui-icon name="sound" style="margin-left:6px"></ui-icon><ui-label size="11.5" w="22" style="margin:-2px 12px 0 9px">ENG</ui-label><div class="clock"><ui-label size="11.5" w="25">19:08</ui-label><ui-label size="11.5" w="50">15.11.2021</ui-label></div><ui-icon name="note" style="margin:0 18px 0 17px"></ui-icon><div class="edge"></div></div>`);

define('proto-app', `<style>
:host{display:grid;grid-template-rows:30px 39px 613px 37px;width:1280px;height:719px;overflow:hidden}
main{display:grid;grid-template-columns:47px 227px 735px 271px;min-height:0}
</style><title-bar></title-bar><mode-bar></mode-bar><main><tool-rail></tool-rail><layers-panel></layers-panel><design-canvas></design-canvas><interaction-panel></interaction-panel></main><task-bar></task-bar>`);
</script>
</body>
</html>
